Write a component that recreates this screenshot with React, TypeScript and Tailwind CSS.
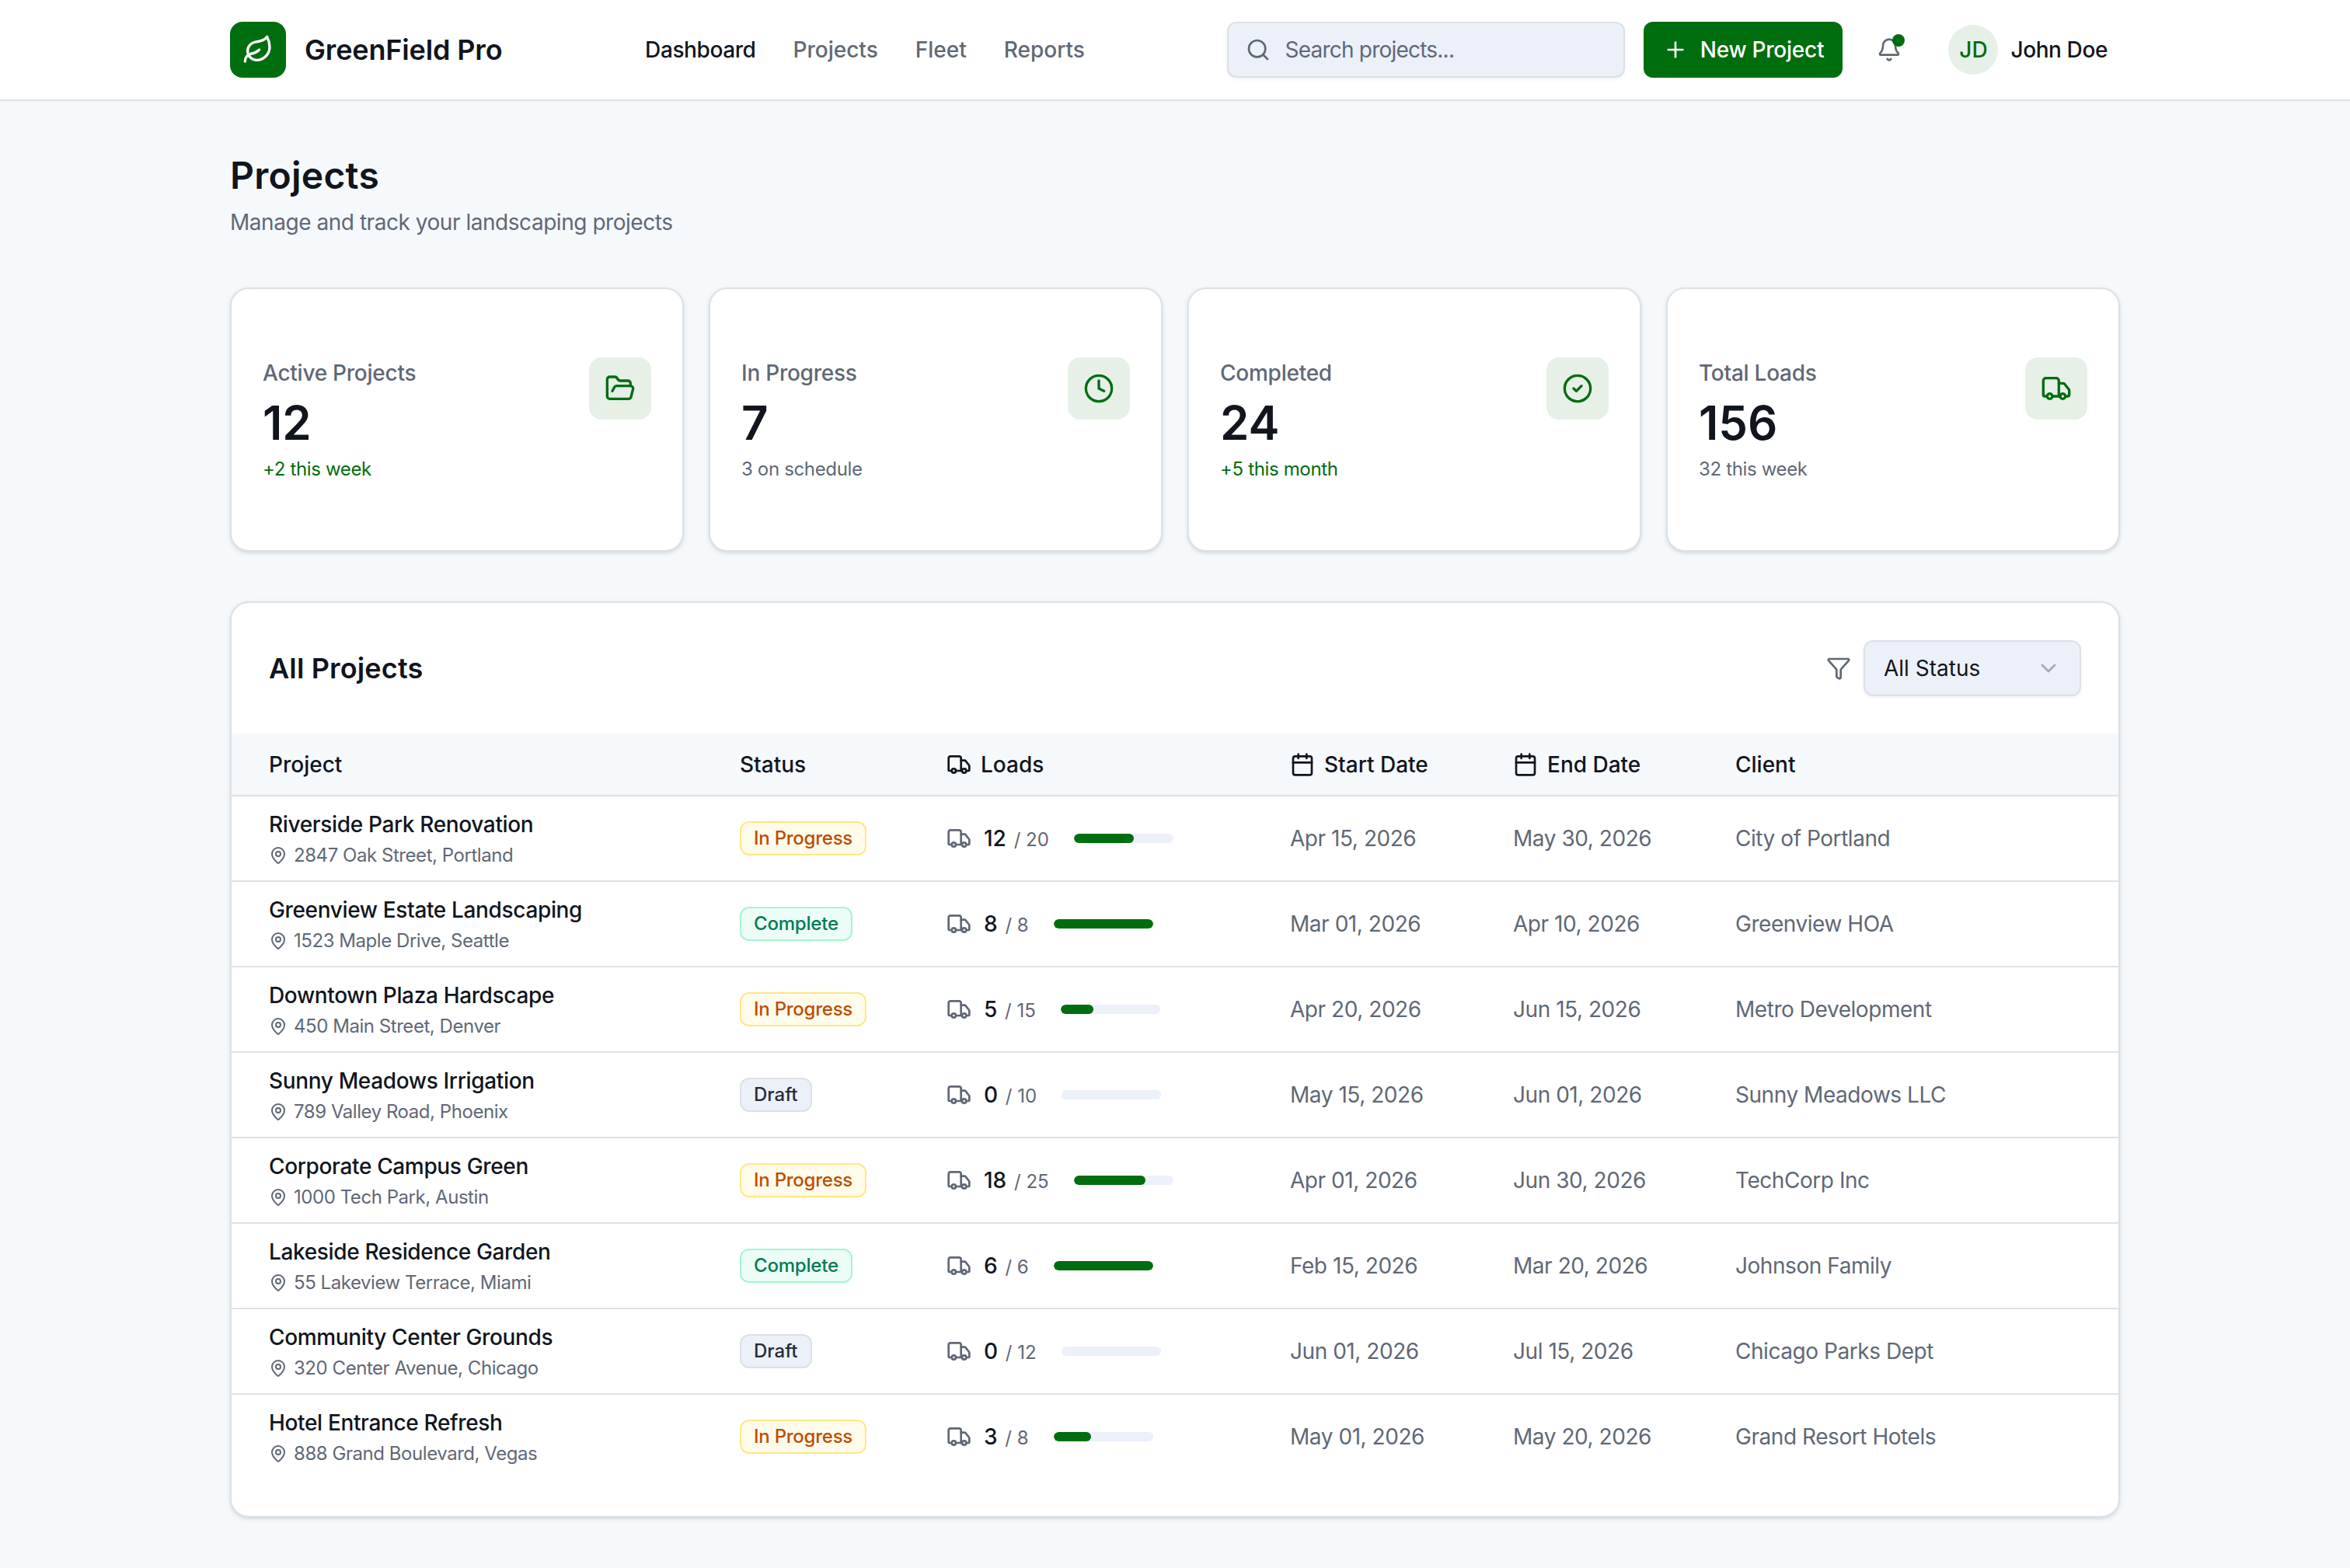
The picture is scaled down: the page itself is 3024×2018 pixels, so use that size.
import React from 'react';
import {
  Bell,
  Calendar,
  ChevronDown,
  CircleCheck,
  Clock,
  FolderOpen,
  Funnel,
  Leaf,
  LucideIcon,
  MapPin,
  Plus,
  Search,
  Truck,
} from 'lucide-react';

type Status = 'progress' | 'complete' | 'draft';

interface Project {
  name: string;
  address: string;
  status: Status;
  loads: number;
  total: number;
  start: string;
  end: string;
  client: string;
}

interface Stat {
  label: string;
  value: string;
  note: string;
  positive: boolean;
  icon: LucideIcon;
}

const navItems = ['Dashboard', 'Projects', 'Fleet', 'Reports'];

const stats: Stat[] = [
  { label: 'Active Projects', value: '12', note: '+2 this week', positive: true, icon: FolderOpen },
  { label: 'In Progress', value: '7', note: '3 on schedule', positive: false, icon: Clock },
  { label: 'Completed', value: '24', note: '+5 this month', positive: true, icon: CircleCheck },
  { label: 'Total Loads', value: '156', note: '32 this week', positive: false, icon: Truck },
];

const projects: Project[] = [
  { name: 'Riverside Park Renovation', address: '2847 Oak Street, Portland', status: 'progress', loads: 12, total: 20, start: 'Apr 15, 2026', end: 'May 30, 2026', client: 'City of Portland' },
  { name: 'Greenview Estate Landscaping', address: '1523 Maple Drive, Seattle', status: 'complete', loads: 8, total: 8, start: 'Mar 01, 2026', end: 'Apr 10, 2026', client: 'Greenview HOA' },
  { name: 'Downtown Plaza Hardscape', address: '450 Main Street, Denver', status: 'progress', loads: 5, total: 15, start: 'Apr 20, 2026', end: 'Jun 15, 2026', client: 'Metro Development' },
  { name: 'Sunny Meadows Irrigation', address: '789 Valley Road, Phoenix', status: 'draft', loads: 0, total: 10, start: 'May 15, 2026', end: 'Jun 01, 2026', client: 'Sunny Meadows LLC' },
  { name: 'Corporate Campus Green', address: '1000 Tech Park, Austin', status: 'progress', loads: 18, total: 25, start: 'Apr 01, 2026', end: 'Jun 30, 2026', client: 'TechCorp Inc' },
  { name: 'Lakeside Residence Garden', address: '55 Lakeview Terrace, Miami', status: 'complete', loads: 6, total: 6, start: 'Feb 15, 2026', end: 'Mar 20, 2026', client: 'Johnson Family' },
  { name: 'Community Center Grounds', address: '320 Center Avenue, Chicago', status: 'draft', loads: 0, total: 12, start: 'Jun 01, 2026', end: 'Jul 15, 2026', client: 'Chicago Parks Dept' },
  { name: 'Hotel Entrance Refresh', address: '888 Grand Boulevard, Vegas', status: 'progress', loads: 3, total: 8, start: 'May 01, 2026', end: 'May 20, 2026', client: 'Grand Resort Hotels' },
];

const statusLabel: Record<Status, string> = {
  progress: 'In Progress',
  complete: 'Complete',
  draft: 'Draft',
};

const statusClass: Record<Status, string> = {
  progress: 'bg-amber-50 border-amber-200 text-amber-700 tracking-[-0.25px]',
  complete: 'bg-emerald-50 border-emerald-200 text-emerald-700 tracking-[-0.2px]',
  draft: 'bg-[#ebf0f9] border-[#dce1e6] text-[#262b36]',
};

const gridCols = 'grid grid-cols-[606px_266px_442px_287px_286px_1fr] pl-12';

function Header() {
  return (
    <header className="bg-white border-b-2 border-[#dce1e6]">
      <div className="w-[2432px] h-32 mx-auto flex items-center justify-between">
        <div className="flex items-center gap-6">
          <div className="size-[72px] rounded-2xl bg-[#006d0f] flex items-center justify-center">
            <Leaf className="size-10 text-white" />
          </div>
          <span className="text-[36px] font-semibold tracking-[-0.15px]">GreenField Pro</span>
        </div>

        <nav className="flex items-center gap-12 font-medium">
          {navItems.map((item, i) => (
            <a key={item} className={i === 0 ? 'tracking-[-0.4px]' : 'text-[#5f6875]'}>{item}</a>
          ))}
        </nav>

        <div className="flex items-center gap-6">
          <div className="w-[512px] h-[72px] px-[22px] flex items-center gap-[18px] rounded-xl border-2 border-[#dce1e6] bg-[#ebf0f9] text-[#5f6875] shadow-[0_2px_4px_0_rgb(0_0_0/0.05)]">
            <Search className="size-8" />
            <span className="tracking-[-0.78px]">Search projects...</span>
          </div>
          <button className="w-[256px] h-[72px] flex items-center justify-center gap-4 rounded-xl bg-[#006d0f] text-white font-medium tracking-[-0.25px]">
            <Plus className="size-8" />
            New Project
          </button>
          <button className="relative size-[72px] flex items-center justify-center">
            <Bell className="size-8 text-[#5f6875]" />
            <span className="absolute top-4 right-4 size-4 rounded-full bg-[#006d0f]" />
          </button>
          <button className="flex items-center gap-4 px-4 font-medium">
            <span className="size-16 rounded-full bg-[#e6f0e7] text-[#006d0f] flex items-center justify-center">JD</span>
            <span className="tracking-[-0.4px]">John Doe</span>
          </button>
        </div>
      </div>
    </header>
  );
}

function StatCard({ stat }: { stat: Stat }) {
  const Icon = stat.icon;
  return (
    <div className="h-[340px] px-10 pt-[88px] flex items-start justify-between bg-white rounded-3xl border-2 border-[#dce1e6] shadow-[0_2px_6px_0_rgb(0_0_0/0.1),0_2px_4px_-2px_rgb(0_0_0/0.1)]">
      <div>
        <p className="font-medium text-[#5f6875] tracking-[-0.25px]">{stat.label}</p>
        <p className="mt-2 text-[60px] leading-[72px] font-semibold">{stat.value}</p>
        <p className={`mt-2 text-2xl leading-8 tracking-[-0.35px] ${stat.positive ? 'text-[#006d0f]' : 'text-[#5f6875]'}`}>{stat.note}</p>
      </div>
      <div className="size-20 rounded-2xl bg-[#e6f0e7] flex items-center justify-center">
        <Icon className="size-10 text-[#006d0f]" />
      </div>
    </div>
  );
}

function ProjectRow({ project }: { project: Project }) {
  const percent = (project.loads / project.total) * 100;
  return (
    <div className={`${gridCols} h-[110px] items-center border-b-2 border-[#dce1e6] last:h-[108px] last:border-b-0`}>
      <div>
        <p className="font-medium tracking-[-0.35px]">{project.name}</p>
        <p className="mt-1 flex items-center gap-2 text-2xl leading-8 tracking-[-0.45px] text-[#5f6875]">
          <MapPin className="size-6" />
          {project.address}
        </p>
      </div>
      <div className="flex">
        <span className={`h-11 px-4 flex items-center rounded-xl border-2 text-2xl font-medium ${statusClass[project.status]}`}>
          {statusLabel[project.status]}
        </span>
      </div>
      <div className="flex items-center gap-4">
        <Truck className="size-8 text-[#5f6875]" />
        <p>
          <span className="font-medium">{project.loads}</span>
          <span className="ml-[3px] text-2xl text-[#5f6875]"> / {project.total}</span>
        </p>
        <div className="ml-4 w-32 h-3 rounded-full bg-[#ebf0f9] overflow-hidden">
          <div className="h-full rounded-full bg-[#006d0f]" style={{ width: `${percent}%` }} />
        </div>
      </div>
      <p className="text-[#5f6875] tracking-[-0.45px]">{project.start}</p>
      <p className="text-[#5f6875] tracking-[-0.45px]">{project.end}</p>
      <p className="text-[#5f6875] tracking-[-0.45px]">{project.client}</p>
    </div>
  );
}

function ProjectsTable() {
  return (
    <section className="mt-16 pt-12 pb-12 bg-white rounded-3xl border-2 border-[#dce1e6] shadow-[0_2px_6px_0_rgb(0_0_0/0.1),0_2px_4px_-2px_rgb(0_0_0/0.1)]">
      <div className="px-12 mb-12 flex items-center justify-between">
        <h2 className="text-[36px] font-semibold tracking-[0.15px]">All Projects</h2>
        <div className="flex items-center gap-4">
          <Funnel className="size-8 text-[#5f6875]" />
          <button className="w-[280px] h-[72px] px-6 flex items-center justify-between rounded-xl border-2 border-[#dce1e6] bg-[#ebf0f9] shadow-[0_2px_4px_0_rgb(0_0_0/0.05)]">
            All Status
            <ChevronDown className="size-8 text-[#5f6875] opacity-50" />
          </button>
        </div>
      </div>

      <div className={`${gridCols} h-[81px] items-center bg-[#f5f9fc] border-b-2 border-[#dce1e6] font-medium`}>
        <span>Project</span>
        <span>Status</span>
        <span className="flex items-center gap-3"><Truck className="size-8" />Loads</span>
        <span className="flex items-center gap-3"><Calendar className="size-8" />Start Date</span>
        <span className="flex items-center gap-3"><Calendar className="size-8" />End Date</span>
        <span>Client</span>
      </div>

      <div>
        {projects.map(p => <ProjectRow key={p.name} project={p} />)}
      </div>
    </section>
  );
}

export default function App() {
  return (
    <div className="min-h-[2018px] bg-[#f5f9fc] text-[#11151d] text-[28px] leading-10 font-['Inter','Liberation_Sans',sans-serif]">
      <Header />
      <main className="w-[2432px] mx-auto pt-16">
        <h1 className="text-5xl leading-[64px] font-semibold tracking-[0.25px]">Projects</h1>
        <p className="mt-2 text-[#5f6875] tracking-[-0.46px]">Manage and track your landscaping projects</p>

        <div className="mt-16 grid grid-cols-4 gap-8">
          {stats.map(s => <StatCard key={s.label} stat={s} />)}
        </div>

        <ProjectsTable />
      </main>
    </div>
  );
}
